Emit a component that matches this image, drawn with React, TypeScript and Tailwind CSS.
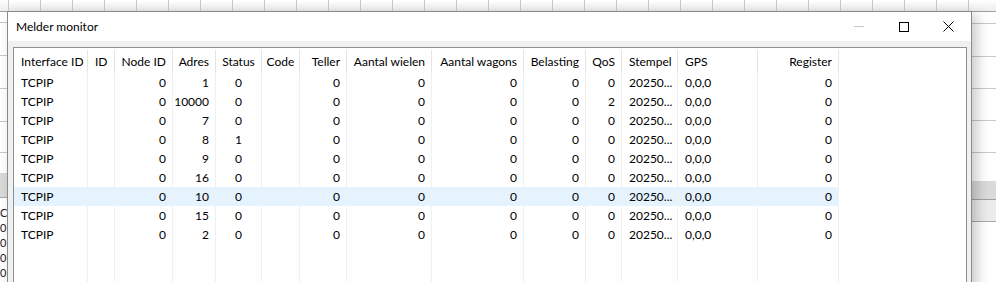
import React from "react";

type Col = { h: string; w: string; a: "l" | "r" | "c" };

const cols: Col[] = [
  { h: "Interface ID", w: "w-[74px]", a: "l" },
  { h: "ID", w: "w-[27px]", a: "l" },
  { h: "Node ID", w: "w-[58px]", a: "r" },
  { h: "Adres", w: "w-[43px]", a: "r" },
  { h: "Status", w: "w-[46px]", a: "c" },
  { h: "Code", w: "w-[38px]", a: "c" },
  { h: "Teller", w: "w-[47px]", a: "r" },
  { h: "Aantal wielen", w: "w-[85px]", a: "r" },
  { h: "Aantal wagons", w: "w-[92px]", a: "r" },
  { h: "Belasting", w: "w-[62px]", a: "r" },
  { h: "QoS", w: "w-[36px]", a: "r" },
  { h: "Stempel", w: "w-[56px]", a: "l" },
  { h: "GPS", w: "w-[80px]", a: "l" },
  { h: "Register", w: "w-[81px]", a: "r" },
];

const adres = ["1", "10000", "7", "8", "9", "16", "10", "15", "2"];
const status = ["0", "0", "0", "1", "0", "0", "0", "0", "0"];
const qos = ["0", "2", "0", "0", "0", "0", "0", "0", "0"];

const rows: string[][] = adres.map((a, i) => [
  "TCPIP",
  "",
  "0",
  a,
  status[i],
  "",
  "0",
  "0",
  "0",
  "0",
  qos[i],
  "20250...",
  "0,0,0",
  "0",
]);

const alignCls = (a: Col["a"]) =>
  a === "l" ? "justify-start pl-[7px]" : a === "r" ? "justify-end pr-[6px]" : "justify-center";

function Background() {
  const gridCells = Array.from({ length: 31 });
  return (
    <div className="absolute inset-0 bg-white">
      {/* header strip */}
      <div className="flex h-[12px] border-b border-[#a0a0a0] bg-[linear-gradient(#ffffff,#ededed)]">
        <div className="w-[9px] shrink-0 border-r border-[#c8c8c8]" />
        {gridCells.map((_, i) => (
          <div key={i} className="w-[32px] shrink-0 border-r border-[#c8c8c8]" />
        ))}
      </div>
      <div className="flex h-[270px]">
        {/* left strip */}
        <div className="flex w-[8px] shrink-0 flex-col overflow-hidden">
          <div className="h-[11px] shrink-0 border-b border-[#c8c8c8]" />
          <div className="h-[33px] shrink-0 border-b border-[#c8c8c8]" />
          <div className="h-[33px] shrink-0 border-b border-[#c8c8c8]" />
          <div className="h-[33px] shrink-0 border-b border-[#c8c8c8]" />
          <div className="h-[31px] shrink-0 border-b border-[#c8c8c8]" />
          <div className="h-[20px] shrink-0" />
          <div className="h-[25px] shrink-0 border-b border-[#a8a8a8] bg-[#d9d9d9]" />
          <div className="flex flex-col font-['Lato',sans-serif] text-[11px] leading-[15px] text-[#222]">
            <div className="mt-[7px]">C</div>
            <div>0</div>
            <div>0</div>
            <div>0</div>
            <div>0</div>
          </div>
        </div>
        <div className="flex-1" />
        {/* right strip */}
        <div className="flex w-[26px] shrink-0 flex-col">
          <div className="h-[12px] shrink-0 border-b border-[#c8c8c8]" />
          <div className="h-[33px] shrink-0 border-b border-[#c8c8c8]" />
          <div className="h-[32px] shrink-0 border-b border-[#c8c8c8]" />
          <div className="h-[32px] shrink-0 border-b border-[#c8c8c8]" />
          <div className="h-[32px] shrink-0 border-b border-[#c8c8c8]" />
          <div className="h-[28px] shrink-0" />
          <div className="h-[19px] shrink-0 border-b border-[#a0a0a0] bg-[#dadada]" />
          <div className="h-[22px] shrink-0 border-b border-[#a8a8a8] bg-[#ececec]" />
        </div>
      </div>
    </div>
  );
}

function ListView() {
  return (
    <div className="flex min-h-0 flex-1 border border-[#8e8f8f] bg-white">
      {cols.map((c, ci) => (
        <div key={ci} className={`flex shrink-0 flex-col ${c.w}`}>
          <div className="flex h-[25px] shrink-0 items-end">
            <div
              className={`flex h-[23px] w-full items-center border-r border-[#e5e5e5] ${alignCls(c.a)}`}
            >
              <span className="whitespace-nowrap">{c.h}</span>
            </div>
          </div>
          <div className="flex flex-1 flex-col border-r border-[#f0f0f0]">
            {rows.map((r, ri) => (
              <div
                key={ri}
                className={`flex h-[19px] shrink-0 items-center ${alignCls(c.a)} ${
                  ri === 6 ? "bg-[#e5f3ff]" : ""
                }`}
              >
                <span className="whitespace-nowrap">{r[ci]}</span>
              </div>
            ))}
          </div>
        </div>
      ))}
      <div className="flex-1" />
    </div>
  );
}

export default function App() {
  return (
    <div className="relative h-[282px] w-[996px] overflow-hidden bg-white font-['Lato',sans-serif] text-[12px] text-black">
      <Background />
      <div className="absolute left-[7px] top-[11px] flex h-[320px] w-[965px] flex-col border border-[#8a8a8a] bg-[#f0f0f0] shadow-[5px_4px_12px_rgba(0,0,0,0.22)]">
        <div className="flex h-[29px] shrink-0 items-center bg-white">
          <div className="flex-1 pl-[8px] text-[12px] text-black">Melder monitor</div>
          <div className="flex h-full w-[45px] items-center justify-center">
            <div className="h-px w-[10px] bg-[#c6c6c6]" />
          </div>
          <div className="flex h-full w-[45px] items-center justify-center">
            <div className="h-[10px] w-[10px] border border-black" />
          </div>
          <div className="flex h-full w-[45px] items-center justify-center">
            <svg width="11" height="11" viewBox="0 0 11 11">
              <path d="M0.5 0.5 L10.5 10.5 M10.5 0.5 L0.5 10.5" stroke="#000" strokeWidth="1" fill="none" />
            </svg>
          </div>
        </div>
        <div className="flex min-h-0 flex-1 flex-col pl-[5px] pr-[4px] pt-[6px]">
          <ListView />
        </div>
      </div>
    </div>
  );
}
